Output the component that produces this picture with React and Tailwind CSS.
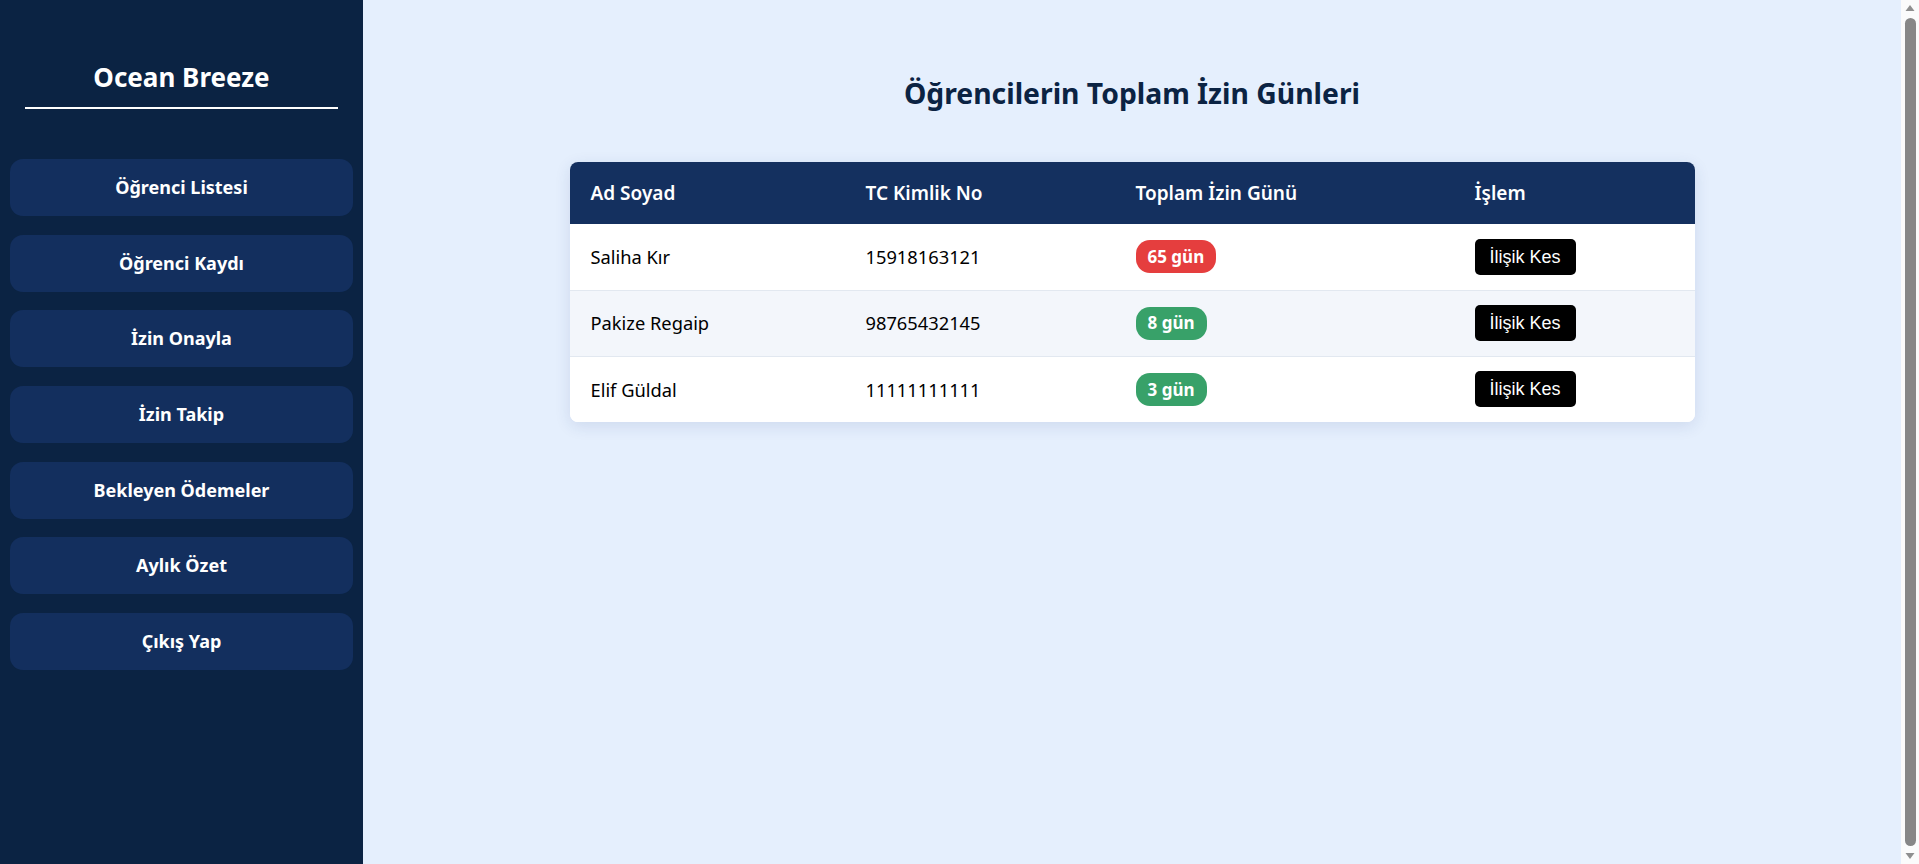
const navItems = [
  'Öğrenci Listesi',
  'Öğrenci Kaydı',
  'İzin Onayla',
  'İzin Takip',
  'Bekleyen Ödemeler',
  'Aylık Özet',
  'Çıkış Yap',
];

const students = [
  { name: 'Saliha Kır', tc: '15918163121', days: 65 },
  { name: 'Pakize Regaip', tc: '98765432145', days: 8 },
  { name: 'Elif Güldal', tc: '11111111111', days: 3 },
];

export default function App() {
  return (
    <div
      className="flex h-screen overflow-hidden bg-[#e5effd]"
      style={{ fontFamily: '"Noto Sans", "Open Sans", sans-serif' }}
    >
      {/* Sidebar */}
      <aside className="w-[363px] shrink-0 bg-[#0b2343] flex flex-col">
        <div className="mx-[25px] mt-[61px] pb-[14px] border-b-2 border-white">
          <h2 className="text-white text-[26px] leading-[32px] font-bold text-center">Ocean Breeze</h2>
        </div>
        <nav className="mt-[50px] px-[10px] flex flex-col gap-[18.7px]">
          {navItems.map((item) => (
            <button
              key={item}
              className="h-[57px] w-full rounded-[13px] bg-[#132f5e] text-white text-[18px] font-bold flex items-center justify-center"
            >
              {item}
            </button>
          ))}
        </nav>
      </aside>

      {/* Main */}
      <main className="flex-1 pt-[75px]">
        <h1 className="text-center text-[28.3px] leading-[37px] font-bold text-[#0b2343]">
          Öğrencilerin Toplam İzin Günleri
        </h1>

        <div className="w-[1125px] mx-auto mt-[50px] rounded-lg overflow-hidden bg-white shadow-[0_4px_16px_rgba(30,60,120,0.12)]">
          <table className="w-full border-collapse table-fixed">
            <thead>
              <tr className="bg-[#14305f] text-white text-left h-[62px] text-[19px]">
                <th className="w-[275px] pl-[21px] font-semibold">Ad Soyad</th>
                <th className="w-[270px] pl-[21px] font-semibold">TC Kimlik No</th>
                <th className="w-[339px] pl-[21px] font-semibold">Toplam İzin Günü</th>
                <th className="pl-[21px] font-semibold">İşlem</th>
              </tr>
            </thead>
            <tbody>
              {students.map((s, i) => (
                <tr
                  key={s.tc}
                  className={`h-[66px] text-[18.3px] text-black ${i > 0 ? 'border-t border-[#e2e8f0]' : ''} ${i === 1 ? 'bg-[#f3f6fb]' : 'bg-white'}`}
                >
                  <td className="pl-[21px]">{s.name}</td>
                  <td className="pl-[21px]">{s.tc}</td>
                  <td className="pl-[21px]">
                    <span
                      className={`inline-flex items-center h-[33px] px-[12px] rounded-[14px] text-white text-[17px] font-bold ${s.days > 30 ? 'bg-[#e53e3e]' : 'bg-[#38a169]'}`}
                    >
                      {s.days} gün
                    </span>
                  </td>
                  <td className="pl-[21px]">
                    <button
                      className="h-[36px] px-[15px] rounded-[5px] bg-black text-white text-[18px] leading-none"
                      style={{ fontFamily: '"Liberation Sans", Arial, sans-serif' }}
                    >
                      İlişik Kes
                    </button>
                  </td>
                </tr>
              ))}
            </tbody>
          </table>
        </div>
      </main>

      {/* Window scrollbar */}
      <div className="w-[18px] shrink-0 bg-[#fbfbfb] flex flex-col items-center py-[3px]">
        <svg width="10" height="8" viewBox="0 0 10 8" className="mt-[1px]">
          <path d="M5 1 L9.5 7 L0.5 7 Z" fill="#8f8f8f" />
        </svg>
        <div className="w-[11px] flex-1 my-[6px] rounded-full bg-[#878787]" />
        <svg width="10" height="8" viewBox="0 0 10 8" className="mb-[1px]">
          <path d="M0.5 1 L9.5 1 L5 7 Z" fill="#8f8f8f" />
        </svg>
      </div>
    </div>
  );
}
